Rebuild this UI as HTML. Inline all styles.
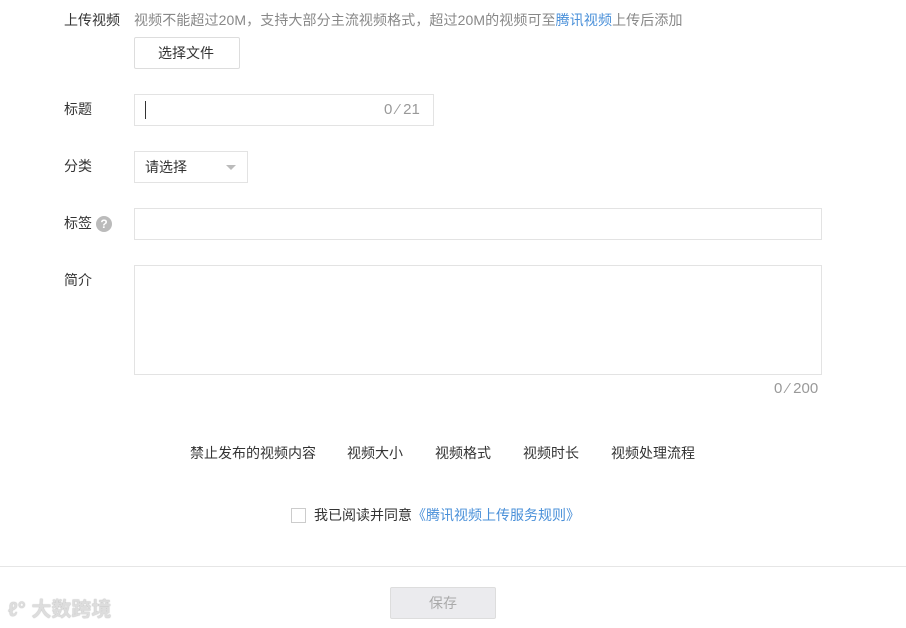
<!DOCTYPE html>
<html><head><meta charset="utf-8"><style>
*{margin:0;padding:0;box-sizing:border-box}
body{width:906px;height:628px;background:#fff;position:relative;font-family:"Liberation Sans","Noto Sans CJK SC",sans-serif;font-size:14px;color:#333;overflow:hidden}
.a{position:absolute;white-space:nowrap;line-height:18px}
.box{position:absolute;border:1px solid #e3e3e3;background:#fff}
.g{color:#888}
.b{color:#4a90d9}
</style></head><body>
<div class="a" style="left:64px;top:11px">上传视频</div>
<div class="a g" style="left:134px;top:11px;letter-spacing:0.1px">视频不能超过20M，支持大部分主流视频格式，超过20M的视频可至<span class="b">腾讯视频</span>上传后添加</div>
<div class="box" style="left:134px;top:37px;width:106px;height:32px;border-radius:2px;border-color:#ddd"></div>
<div class="a" style="left:158px;top:44px">选择文件</div>

<div class="a" style="left:64px;top:100px">标题</div>
<div class="box" style="left:134px;top:94px;width:300px;height:32px"></div>
<div class="a" style="left:145px;top:101px;width:1px;height:18px;background:#333"></div>
<div class="a" style="left:384px;top:101px;color:#999;font-size:15px">0 ⁄ 21</div>

<div class="a" style="left:64px;top:157px">分类</div>
<div class="box" style="left:134px;top:151px;width:114px;height:32px"></div>
<div class="a" style="left:145px;top:158px">请选择</div>
<div class="a" style="left:226px;top:165px;width:0;height:0;border-left:5px solid transparent;border-right:5px solid transparent;border-top:5px solid #bbb"></div>

<div class="a" style="left:64px;top:214px">标签</div>
<div class="a" style="left:96px;top:216px;width:16px;height:16px;border-radius:50%;background:#bbb;color:#fff;font-size:12px;font-weight:bold;text-align:center;line-height:16px">?</div>
<div class="box" style="left:134px;top:208px;width:688px;height:32px"></div>

<div class="a" style="left:64px;top:271px">简介</div>
<div class="box" style="left:134px;top:265px;width:688px;height:110px"></div>
<div class="a" style="left:774px;top:380px;color:#999;font-size:15px">0 ⁄ 200</div>

<div class="a" style="left:190px;top:444px">禁止发布的视频内容</div>
<div class="a" style="left:347px;top:444px">视频大小</div>
<div class="a" style="left:435px;top:444px">视频格式</div>
<div class="a" style="left:523px;top:444px">视频时长</div>
<div class="a" style="left:611px;top:444px">视频处理流程</div>

<div class="box" style="left:291px;top:508px;width:15px;height:15px;border-color:#ccc"></div>
<div class="a" style="left:314px;top:506px">我已阅读并同意<span class="b">《腾讯视频上传服务规则》</span></div>

<div class="a" style="left:0;top:566px;width:906px;height:1px;background:#e6e6e6"></div>
<div class="a" style="left:390px;top:587px;width:106px;height:32px;background:#ebebee;border:1px solid #ddd;border-radius:2px;color:#aaa;text-align:center;line-height:30px">保存</div>
<div class="a" style="left:8px;top:598px;color:#ddd;font-size:20px;font-weight:bold;line-height:24px;text-shadow:0 0 1px #999">ℓ° 大数跨境</div>
</body></html>
